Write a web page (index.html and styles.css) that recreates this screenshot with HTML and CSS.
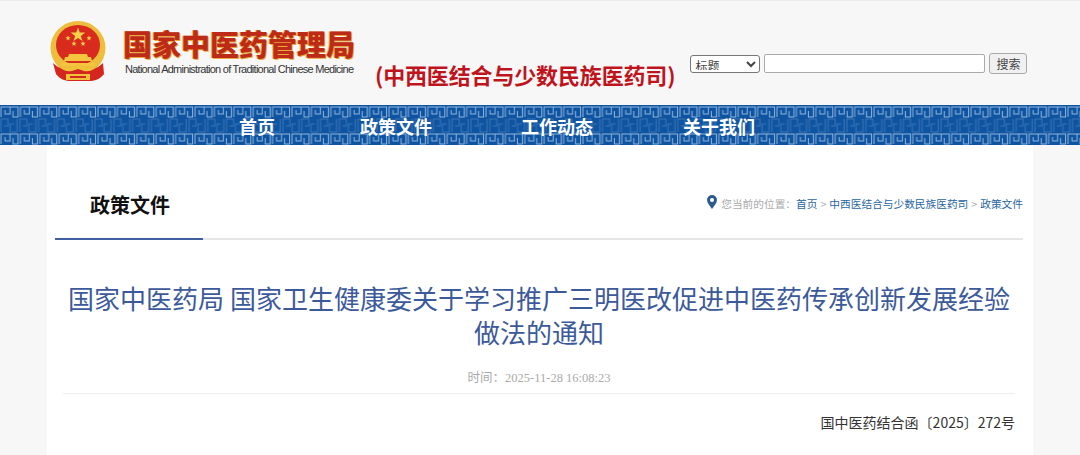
FILE: index.html
```html
<!DOCTYPE html>
<html lang="zh-CN">
<head>
    <meta charset="UTF-8">
    <title>政策文件</title>
    <link rel="stylesheet" href="styles.css">
</head>
<body>
    <div class="header">
        <div class="logo">
            <svg class="emblem" width="58" height="61" viewBox="0 0 58 61">
                <ellipse cx="28" cy="27" rx="27.5" ry="27" fill="#eebd3c"/>
                <ellipse cx="28" cy="24" rx="22" ry="20" fill="#d92a1e"/>
                <polygon points="28,6.5 29.8,11.6 35.2,11.6 30.9,14.9 32.5,20 28,16.9 23.5,20 25.1,14.9 20.8,11.6 26.2,11.6" fill="#f8d24a"/>
                <polygon points="18,14.5 18.7,16.3 20.6,16.3 19.1,17.5 19.6,19.4 18,18.3 16.4,19.4 16.9,17.5 15.4,16.3 17.3,16.3" fill="#f8d24a"/>
                <polygon points="39,14.5 39.7,16.3 41.6,16.3 40.1,17.5 40.6,19.4 39,18.3 37.4,19.4 37.9,17.5 36.4,16.3 38.3,16.3" fill="#f8d24a"/>
                <polygon points="24,20 24.7,21.8 26.6,21.8 25.1,23 25.6,24.9 24,23.8 22.4,24.9 22.9,23 21.4,21.8 23.3,21.8" fill="#f8d24a"/>
                <polygon points="33,20 33.7,21.8 35.6,21.8 34.1,23 34.6,24.9 33,23.8 31.4,24.9 31.9,23 30.4,21.8 32.3,21.8" fill="#f8d24a"/>
                <path d="M19 33h18l1 3h3l1 4H14l1-4h3z" fill="#f4c63f"/>
                <path d="M11 42h34v3H11z" fill="#f4c63f"/>
                <path d="M3 42c3 3 6 5 10 6l15-3 15 3c4-1 7-3 10-6l1 11c-4 5-9 7-14 7H20c-5 0-10-2-14-7z" fill="#d4261e"/>
                <path d="M10 46c5 1 10 1 13-1l5-2 5 2c3 2 8 2 13 1-3 4-8 5-12 4l-6-2-6 2c-4 1-9 0-12-4z" fill="#f0c23a"/>
                <path d="M16 53h24v6H16z" fill="#f0c23a"/>
                <path d="M20 55h16v2H20z" fill="#d4261e"/>
            </svg>
            <div class="logo-text">
                <div class="logo-cn">国家中医药管理局</div>
                <div class="logo-en">National Administration of Traditional Chinese Medicine</div>
            </div>
        </div>
        <div class="dept">(中西医结合与少数民族医药司)</div>
        <form class="search">
            <select class="search-type"><option>标题</option></select>
            <input type="text" class="search-input">
            <button type="button" class="search-btn">搜索</button>
        </form>
    </div>

    <div class="nav">
        <svg class="nav-bg" width="100%" height="40">
            <defs>
                <pattern id="fret-top" width="19.4" height="13" patternUnits="userSpaceOnUse" y="1">
                    <path d="M1 11V1H10V8H5V4M10 1H18V11H13V5" fill="none" stroke="#8fb4dc" stroke-width="1"/>
                </pattern>
                <pattern id="fret-mid" width="18.8" height="15" patternUnits="userSpaceOnUse" y="13">
                    <path d="M1 14V1H8V8H4M17 1V14H10V6H14" fill="none" stroke="#3b74b6" stroke-width="1"/>
                </pattern>
                <pattern id="fret-bot" width="19.4" height="12" patternUnits="userSpaceOnUse" y="28">
                    <path d="M1 11V1H10V8H5V4M10 1H18V11H13V5" fill="none" stroke="#8fb4dc" stroke-width="1"/>
                </pattern>
            </defs>
            <rect width="100%" height="13" fill="url(#fret-top)"/>
            <rect y="13" width="100%" height="15" fill="url(#fret-mid)"/>
            <rect y="28" width="100%" height="12" fill="url(#fret-bot)"/>
        </svg>
        <div class="nav-items">
            <a class="nav-item">首页</a>
            <a class="nav-item">政策文件</a>
            <a class="nav-item">工作动态</a>
            <a class="nav-item">关于我们</a>
        </div>
    </div>

    <div class="content">
        <div class="tab-bar">
            <div class="tab">政策文件</div>
            <div class="crumbs">
                <svg class="pin" width="10" height="14" viewBox="0 0 10 14">
                    <path d="M5 0a5 5 0 0 1 5 5c0 3-3 6-5 9-2-3-5-6-5-9a5 5 0 0 1 5-5zm0 3a2 2 0 1 0 0 4 2 2 0 0 0 0-4z" fill="#2f5a8c" fill-rule="evenodd"/>
                </svg>
                <span class="crumb-label">您当前的位置：</span>
                <a>首页</a><span class="sep">&gt;</span><a>中西医结合与少数民族医药司</a><span class="sep">&gt;</span><a>政策文件</a>
            </div>
        </div>
        <div class="article">
            <h1 class="article-title">国家中医药局 国家卫生健康委关于学习推广三明医改促进中医药传承创新发展经验做法的通知</h1>
            <div class="article-time">时间：2025-11-28 16:08:23</div>
            <div class="doc-no">国中医药结合函〔2025〕272号</div>
        </div>
    </div>
</body>
</html>
```

FILE: styles.css
```css
html, body {
    margin: 0;
    height: 455px;
    overflow: hidden;
}

body {
    background-color: #f7f7f7;
    font-family: "Noto Sans CJK SC", "Liberation Sans", sans-serif;
}

.header {
    height: 105px;
    display: flex;
    box-sizing: border-box;
    border-top: 1px solid #ececec;
}

.logo {
    display: flex;
    width: 304px;
    margin: 20px 0 0 50px;
}

.emblem {
    margin-right: 15px;
    flex-shrink: 0;
}

.logo-cn {
    font-size: 29px;
    line-height: 42px;
    margin-top: 1px;
    font-weight: 900;
    color: #bd2a17;
    text-shadow: 1px 1px 0 #e9a93c, -1px 0 0 #e9b65a;
    white-space: nowrap;
}

.logo-en {
    margin: -2px 0 0 2px;
    font-family: "Liberation Sans", sans-serif;
    font-size: 11px;
    line-height: 14px;
    color: #333;
    letter-spacing: -0.74px;
    white-space: nowrap;
}

.dept {
    margin: 58px 0 0 21px;
    font-size: 22px;
    line-height: 30px;
    font-weight: 700;
    letter-spacing: -0.15px;
    color: #c0141c;
    white-space: nowrap;
}

.search {
    display: flex;
    align-items: center;
    height: 21px;
    margin: 52px 0 0 15px;
}

.search-type {
    width: 70px;
    height: 18px;
    font-family: "Noto Sans CJK SC", sans-serif;
    font-size: 12px;
    line-height: 14px;
    color: #444;
    margin-right: 4px;
    padding: 0 0 2px;
    background: #fff;
    border: 1px solid #777;
    border-radius: 3px;
}

.search-input {
    width: 221px;
    height: 19px;
    box-sizing: border-box;
    margin-right: 4px;
    background: #fff;
    border: 1px solid #aaa;
    border-radius: 2px;
}

.search-btn {
    width: 38px;
    height: 21px;
    padding: 0;
    font-family: "Noto Sans CJK SC", sans-serif;
    font-size: 12px;
    color: #444;
    background: #f0f0f0;
    border: 1px solid #aaa;
    border-radius: 3px;
}

.nav {
    position: relative;
    height: 40px;
    background-color: #0f54a0;
    overflow: hidden;
}

.nav-bg {
    position: absolute;
    left: 0;
    top: 0;
}

.nav-items {
    position: relative;
    display: grid;
    grid-template-columns: 121px 161px 162px 72px;
    padding-left: 239px;
}

.nav-item {
    font-size: 18px;
    line-height: 43px;
    font-weight: 700;
    color: #fff;
    white-space: nowrap;
}

.content {
    width: 986px;
    height: 310px;
    margin-left: 47px;
    box-sizing: border-box;
    padding: 0 10px 0 8px;
    background-color: #fff;
}

.tab-bar {
    height: 95px;
    display: flex;
    justify-content: space-between;
    box-sizing: border-box;
    border-bottom: 2px solid #e6e6e6;
}

.tab {
    width: 148px;
    height: 95px;
    box-sizing: border-box;
    padding-left: 35px;
    font-size: 20px;
    line-height: 119px;
    font-weight: 700;
    color: #111;
    border-bottom: 2px solid #3f5f9f;
}

.crumbs {
    display: flex;
    align-items: center;
    height: 18px;
    margin-top: 49px;
    font-size: 10.7px;
    color: #2a669e;
}

.pin {
    margin: -3px 4px 0 0;
}

.crumb-label {
    color: #aaa;
}

.sep {
    margin: 0 3px;
    color: #aaa;
}

.article {
    padding: 0 10px;
}

.article-title {
    margin: 41px 0 0;
    width: 948px;
    font-size: 26px;
    line-height: 34px;
    font-weight: 400;
    text-align: center;
    color: #3c5a9a;
}

.article-time {
    height: 30px;
    margin: 15px -2px 0 -2px;
    box-sizing: border-box;
    border-bottom: 1px solid #eee;
    font-family: "Liberation Serif", "Noto Sans CJK SC", serif;
    font-size: 12.5px;
    line-height: 28px;
    text-align: center;
    color: #aaa;
}

.doc-no {
    margin: 16px -2px 0 0;
    font-size: 14px;
    line-height: 24px;
    text-align: right;
    color: #333;
}
```
